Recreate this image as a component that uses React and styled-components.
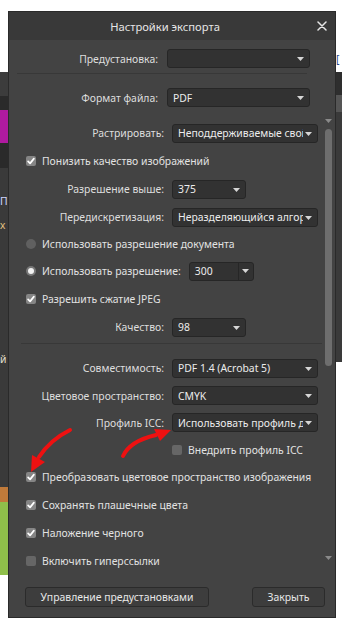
import React from 'react';
import styled, { createGlobalStyle } from 'styled-components';

const GlobalStyle = createGlobalStyle`
  html, body { margin: 0; padding: 0; background: #ffffff; }
  body { font-family: "Noto Sans", "Open Sans", sans-serif; }
  * { box-sizing: border-box; }
`;

const FONT = `"Noto Sans", "Open Sans", sans-serif`;

const Page = styled.div`
  position: relative;
  width: 342px;
  height: 633px;
  overflow: hidden;
  display: grid;
  grid-template-columns: 8px 328px 6px;
  background: #ffffff;
`;

const Strip = styled.div`
  display: flex;
  flex-direction: column;
  overflow: hidden;
`;

const Block = styled.div`
  flex: none;
  height: ${p => p.$h}px;
  background: ${p => p.$bg};
  color: ${p => p.$fg || '#dddddd'};
  font: 10.4px ${FONT};
  line-height: 14px;
  white-space: nowrap;
  overflow: hidden;
  padding-top: ${p => p.$pt || 0}px;
`;

const Dialog = styled.div`
  margin-top: 11px;
  height: 607px;
  display: flex;
  flex-direction: column;
  background: #434343;
  border: 1px solid #2a2a2a;
  color: #e4e4e4;
  font: 10.4px ${FONT};
`;

const TitleBar = styled.div`
  flex: none;
  height: 28px;
  display: flex;
  align-items: center;
  background: #393939;
`;

const Title = styled.div`
  flex: 1;
  text-align: center;
  padding-left: 4px;
  font-size: 11.2px;
  color: #e6e6e6;
`;

const CloseButton = styled.div`
  width: 10px;
  height: 10px;
  margin-right: 8px;
  display: flex;
`;

const TopSection = styled.div`
  flex: none;
  padding-top: 9px;
`;

const FieldRow = styled.div`
  display: flex;
  align-items: center;
  height: ${p => p.$h || 28}px;
  gap: ${p => p.$gap || 8}px;
`;

const Label = styled.div`
  flex: none;
  width: ${p => p.$w}px;
  text-align: right;
  white-space: nowrap;
  color: #dedede;
`;

const SelectBox = styled.div`
  flex: none;
  position: relative;
  width: ${p => p.$w}px;
  height: 19px;
  display: flex;
  align-items: center;
  background: #323232;
  border: 1px solid #262626;
  border-radius: 3px;
  color: #ececec;
  padding: 0 14px 0 5px;
  overflow: hidden;
`;

const SelectText = styled.span`
  white-space: nowrap;
  overflow: hidden;
  flex: 1;
`;

const ArrowSlot = styled.div`
  position: absolute;
  right: 5px;
  top: 7px;
  display: flex;
`;

const Combo = styled.div`
  flex: none;
  width: 65px;
  height: 19px;
  margin-left: 2px;
  display: flex;
  background: #323232;
  border: 1px solid #262626;
  border-radius: 3px;
  color: #ececec;
`;

const ComboText = styled.div`
  flex: 1;
  padding-left: 5px;
  display: flex;
  align-items: center;
`;

const ComboButton = styled.div`
  width: 15px;
  border-left: 1px solid #262626;
  display: flex;
  align-items: center;
  justify-content: center;
`;

const Separator = styled.div`
  height: 1px;
  background: #383838;
  margin: ${p => p.$m};
  width: ${p => p.$w || 'auto'};
`;

const ScrollArea = styled.div`
  flex: 1;
  min-height: 0;
  margin-top: 6px;
  display: flex;
`;

const ScrollContent = styled.div`
  flex: 1;
  overflow: hidden;
  padding-top: 6px;
`;

const ScrollBar = styled.div`
  flex: none;
  width: 12px;
  margin-right: 1px;
  display: flex;
  flex-direction: column;
  align-items: center;
  padding: 6px 0 11px;
`;

const ScrollThumb = styled.div`
  width: 7px;
  height: 237px;
  margin-top: 6px;
  border-radius: 4px;
  background: #6e6e6e;
`;

const ScrollSpacer = styled.div`
  flex: 1;
`;

const CheckRow = styled.div`
  display: flex;
  align-items: center;
  height: ${p => p.$h || 28}px;
  padding-left: ${p => p.$indent || 17}px;
  gap: ${p => p.$gap || 6}px;
  white-space: nowrap;
  color: #e2e2e2;
`;

const ButtonRow = styled.div`
  flex: none;
  height: 20px;
  margin: 16px 0 10px;
  padding: 0 10px 0 16px;
  display: flex;
  justify-content: space-between;
`;

const Button = styled.div`
  width: ${p => p.$w}px;
  height: 20px;
  display: flex;
  align-items: center;
  justify-content: center;
  background: #3d3d3d;
  border: 1px solid #2b2b2b;
  border-radius: 3px;
  color: #e8e8e8;
`;

const Overlay = styled.svg`
  position: absolute;
  left: 0;
  top: 0;
  pointer-events: none;
`;

const Caret = ({ color = '#d6d6d6' }) => (
  <svg width="7" height="4" viewBox="0 0 7 4">
    <polygon points="0,0 7,0 3.5,4" fill={color} />
  </svg>
);

const Select = ({ w, children }) => (
  <SelectBox $w={w}>
    <SelectText>{children}</SelectText>
    <ArrowSlot><Caret /></ArrowSlot>
  </SelectBox>
);

const Checkbox = ({ checked }) => (
  <svg width="10" height="10" viewBox="0 0 10 10" style={{ flex: 'none' }}>
    <rect x="0" y="0" width="10" height="10" rx="2" fill={checked ? '#858585' : '#666666'} />
    {checked && (
      <path d="M2.1 5.3 L4.1 7.4 L7.9 2.6" fill="none" stroke="#ffffff" strokeWidth="1.7" strokeLinecap="round" strokeLinejoin="round" />
    )}
  </svg>
);

const Radio = ({ checked }) => (
  <svg width="10" height="10" viewBox="0 0 10 10" style={{ flex: 'none' }}>
    <circle cx="5" cy="5" r="5" fill={checked ? '#777777' : '#606060'} />
    {checked && <circle cx="5" cy="5" r="3" fill="#f2f2f2" />}
  </svg>
);

export default function App() {
  return (
    <>
      <GlobalStyle />
      <Page>
        <Strip>
          <Block $h={72} $bg="#ffffff" />
          <Block $h={24} $bg="#3c3c3c" />
          <Block $h={14} $bg="#2a2a2a" />
          <Block $h={33} $bg="#b01aa0" />
          <Block $h={25} $bg="#2a2a2a" />
          <Block $h={26} $bg="#3a3a3a" />
          <Block $h={24} $bg="#3a3a3a" $fg="#cfd8ff">П</Block>
          <Block $h={134} $bg="#3a3a3a" $fg="#e0c080">х</Block>
          <Block $h={135} $bg="#3a3a3a" $fg="#e8e0d0">й р</Block>
          <Block $h={15} $bg="#c07a3a" />
          <Block $h={73} $bg="#8fbf4a" />
          <Block $h={108} $bg="#ffffff" />
        </Strip>

        <Dialog>
          <TitleBar>
            <Title>Настройки экспорта</Title>
            <CloseButton>
              <svg width="10" height="10" viewBox="0 0 10 10">
                <path d="M1 1 L9 9 M9 1 L1 9" stroke="#e6e6e6" strokeWidth="1.5" strokeLinecap="round" />
              </svg>
            </CloseButton>
          </TitleBar>

          <TopSection>
            <FieldRow $h={19} $gap={9}>
              <Label $w={149}>Предустановка:</Label>
              <Select w={143}></Select>
            </FieldRow>
            <Separator $m="5px 0 14px 8px" $w="290px" />
            <FieldRow $h={19} $gap={9}>
              <Label $w={149}>Формат файла:</Label>
              <Select w={143}>PDF</Select>
            </FieldRow>
          </TopSection>

          <ScrollArea>
            <ScrollContent>
              <FieldRow>
                <Label $w={155}>Растрировать:</Label>
                <Select w={146}>Неподдерживаемые свойства</Select>
              </FieldRow>
              <CheckRow>
                <Checkbox checked />
                Понизить качество изображений
              </CheckRow>
              <FieldRow>
                <Label $w={155}>Разрешение выше:</Label>
                <Select w={74}>375</Select>
              </FieldRow>
              <FieldRow>
                <Label $w={155}>Передискретизация:</Label>
                <Select w={146}>Неразделяющийся алгоритм</Select>
              </FieldRow>
              <CheckRow $h={26}>
                <Radio />
                Использовать разрешение документа
              </CheckRow>
              <CheckRow>
                <Radio checked />
                Использовать разрешение:
                <Combo>
                  <ComboText>300</ComboText>
                  <ComboButton><Caret /></ComboButton>
                </Combo>
              </CheckRow>
              <CheckRow>
                <Checkbox checked />
                Разрешить сжатие JPEG
              </CheckRow>
              <FieldRow>
                <Label $w={155}>Качество:</Label>
                <Select w={74}>98</Select>
              </FieldRow>
              <Separator $m="2px 0 10px 12px" />
              <FieldRow>
                <Label $w={155}>Совместимость:</Label>
                <Select w={146}>PDF 1.4 (Acrobat 5)</Select>
              </FieldRow>
              <FieldRow $h={27}>
                <Label $w={155}>Цветовое пространство:</Label>
                <Select w={146}>CMYK</Select>
              </FieldRow>
              <FieldRow $h={27}>
                <Label $w={155}>Профиль ICC:</Label>
                <Select w={146}>Использовать профиль документа</Select>
              </FieldRow>
              <CheckRow $h={27} $indent={163}>
                <Checkbox />
                Внедрить профиль ICC
              </CheckRow>
              <CheckRow>
                <Checkbox checked />
                Преобразовать цветовое пространство изображения
              </CheckRow>
              <CheckRow>
                <Checkbox checked />
                Сохранять плашечные цвета
              </CheckRow>
              <CheckRow>
                <Checkbox checked />
                Наложение черного
              </CheckRow>
              <CheckRow>
                <Checkbox />
                Включить гиперссылки
              </CheckRow>
            </ScrollContent>
            <ScrollBar>
              <Caret color="#8a8a8a" />
              <ScrollThumb />
              <ScrollSpacer />
              <svg width="7" height="4" viewBox="0 0 7 4">
                <polygon points="0,0 7,0 3.5,4" fill="#8a8a8a" />
              </svg>
            </ScrollBar>
          </ScrollArea>

          <ButtonRow>
            <Button $w={184}>Управление предустановками</Button>
            <Button $w={73}>Закрыть</Button>
          </ButtonRow>
        </Dialog>

        <Strip>
          <Block $h={72} $bg="#ffffff" $fg="#2a4a8a" $pt={52}>[</Block>
          <Block $h={23} $bg="#2e2e2e" />
          <Block $h={17} $bg="#555555" />
          <Block $h={250} $bg="#3a3a3a" />
          <Block $h={271} $bg="#ffffff" />
        </Strip>

        <Overlay width="342" height="633" viewBox="0 0 342 633">
          <g stroke="#ee1111" strokeWidth="4" fill="none" strokeLinecap="round">
            <path d="M70 430 Q50 440 39 457" />
            <path d="M123 456 Q130 441 156 435" />
          </g>
          <g fill="#ee1111">
            <polygon points="32,455 45,462 31,472" />
            <polygon points="154,429 160,441 171,430" />
          </g>
        </Overlay>
      </Page>
    </>
  );
}
